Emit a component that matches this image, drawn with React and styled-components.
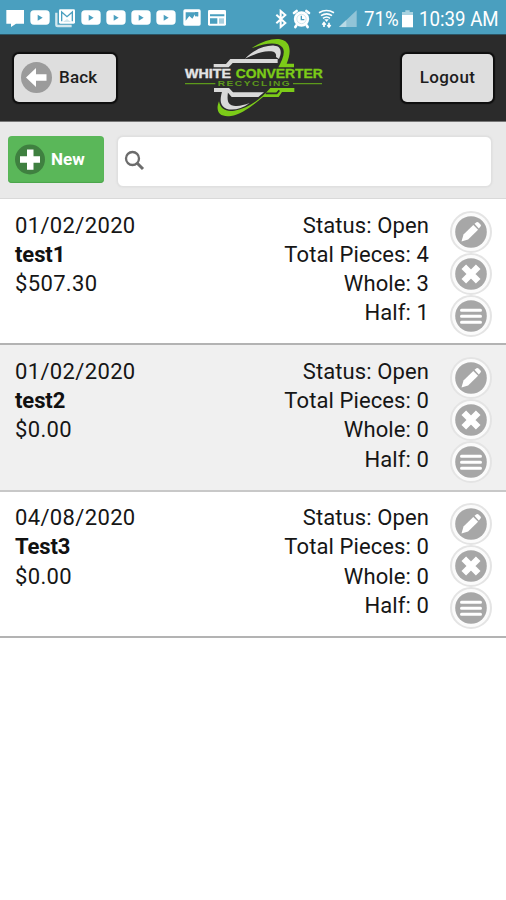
import React from 'react';
import styled, { createGlobalStyle, css } from 'styled-components';

const GlobalStyle = createGlobalStyle`
  * { box-sizing: border-box; }
  body {
    margin: 0;
    background: #fff;
    color: #161616;
    font-family: Roboto, "Liberation Sans", sans-serif;
  }
  svg { display: block; flex: none; }
`;

const Screen = styled.div`
  height: 900px;
  overflow: hidden;
  background: #fff;
`;

const StatusBar = styled.div`
  display: flex;
  justify-content: space-between;
  height: 35px;
  padding: 0 7px 0 4.7px;
  background: #4a9fbf;
  border-bottom: 1px solid #2b5565;
  color: #fff;
`;

const Notifications = styled.div`
  display: flex;
  gap: 5.3px;
  padding-top: 8px;
`;

const SystemInfo = styled.div`
  display: flex;
  align-items: center;
  padding-top: 3px;
`;

const StatusText = styled.span`
  width: ${(props) => props.$width}px;
  font-size: 21px;
  line-height: 28px;
  white-space: nowrap;
  transform: scaleX(0.89);
  transform-origin: left;
`;

const Header = styled.header`
  display: flex;
  align-items: flex-start;
  justify-content: space-between;
  height: 87px;
  padding: 0 13px 0 14px;
  background: #2b2b2b;
  border-bottom: 1px solid #777;
`;

const HeaderButton = styled.button`
  display: flex;
  align-items: center;
  justify-content: ${(props) => (props.$icon ? 'flex-start' : 'center')};
  gap: 7px;
  width: ${(props) => (props.$icon ? 102 : 91)}px;
  height: 48px;
  margin-top: 19px;
  padding: 0 ${(props) => (props.$icon ? 7 : 0)}px 2px;
  border: 0;
  border-radius: 5px;
  background: #dedede;
  box-shadow: 0 0 1px 1.5px #0e0e0e;
  color: #1d1d1d;
  font: 500 17px Roboto, "Liberation Sans", sans-serif;
  letter-spacing: ${(props) => (props.$icon ? 0.2 : 0.4)}px;
`;

const LogoBox = styled.div`
  padding-top: 2px;
  margin-right: 8px;
`;

const Toolbar = styled.div`
  display: flex;
  align-items: flex-start;
  gap: 15px;
  height: 77px;
  padding: 14px 14px 0 8px;
  background: #e9e9e9;
  border-bottom: 1px solid #d9d9d9;
`;

const NewButton = styled.button`
  display: flex;
  align-items: center;
  gap: 6px;
  width: 96px;
  height: 47px;
  padding: 0 7px 1px;
  border: 0;
  border-radius: 4px;
  background: #5ab759;
  box-shadow: inset 0 -1px 1px #4aa54a;
  color: #fff;
  font: 700 17px Roboto, "Liberation Sans", sans-serif;
`;

const SearchField = styled.div`
  display: flex;
  flex: 1;
  align-items: center;
  height: 51px;
  margin-left: -2px;
  padding: 0 6px 2px;
  border: 1px solid #e0e0e0;
  border-radius: 6px;
  background: #fff;
  box-shadow: 0 0 2px #d2d2d2;
`;

const OrderList = styled.ul`
  margin: 0;
  padding: 0;
  list-style: none;
`;

const OrderRow = styled.li`
  display: flex;
  height: 146.3px;
  padding: 11.6px 14px 0 15px;
  border-bottom: 2px solid #b3b3b3;
  background: #fff;
  font-size: 22px;
  line-height: 29.3px;
  letter-spacing: 0.35px;

  ${(props) => props.$shaded && css`
    background: #f0f0f0;
    border-bottom-color: #c8c8c8;
  `}
`;

const OrderSummary = styled.div`
  flex: 1;
`;

const OrderName = styled.div`
  font-weight: 700;
  color: #111;
  letter-spacing: -0.1px;
`;

const OrderCounts = styled.div`
  margin-right: 21px;
  text-align: right;
  letter-spacing: 0.1px;
`;

const Actions = styled.div`
  display: flex;
  flex-direction: column;
`;

const ActionButton = styled.button`
  display: flex;
  align-items: center;
  justify-content: center;
  width: 42px;
  height: 42px;
  padding: 0;
  border: 2px solid #e4e4e4;
  border-radius: 50%;
  background: #fbfbfb;
`;

const ChatIcon = () => (
  <svg width="20" height="20" viewBox="0 0 60 60" fill="#fff">
    <path d="M4 6h53v41H33L18 57V47H4z" />
  </svg>
);

const YoutubeIcon = () => (
  <svg width="20" height="20" viewBox="0 0 60 60">
    <rect x="1" y="7" width="58" height="43" rx="11" fill="#fff" />
    <path d="M23 20l15 9-15 9z" fill="#4a9fbf" />
  </svg>
);

const MailIcon = () => (
  <svg width="20" height="20" viewBox="0 0 60 60">
    <path d="M4 14v36q0 4 4 4h42" fill="none" stroke="#d3e7ee" strokeWidth="7" />
    <rect x="12" y="4" width="48" height="43" rx="4" fill="#fff" />
    <path d="M20 40V12l16 14 16-14v28" fill="none" stroke="#4a9fbf" strokeWidth="4" />
    <path d="M24 42l12-9 12 9z" fill="#d3e7ee" />
  </svg>
);

const PictureIcon = () => (
  <svg width="20" height="20" viewBox="0 0 60 60">
    <rect x="4" y="4" width="52" height="49" rx="5" fill="#fff" />
    <path d="M11 13h37v13l-8-9-9 15-9-8-11 14z" fill="#4a9fbf" />
    <path d="M39 12h10v13H39z" fill="#4a9fbf" />
  </svg>
);

const NewsIcon = () => (
  <svg width="20" height="20" viewBox="0 0 60 60">
    <rect x="3" y="6" width="54" height="47" rx="4" fill="#fff" />
    <path d="M9 19h43v6H9zM9 31h22v16H9z" fill="#4a9fbf" />
    <path d="M36 31h15v16H36z" fill="#a9d0df" />
  </svg>
);

const BluetoothIcon = () => (
  <svg width="14" height="20" viewBox="0 0 42 60">
    <path d="M7 17l27 25-14 12V6l14 12L7 43" fill="none" stroke="#fff" strokeWidth="6" />
  </svg>
);

const AlarmIcon = () => (
  <svg width="19" height="20" viewBox="0 0 57 60">
    <g stroke="#fff" strokeWidth="8" strokeLinecap="round">
      <path d="M6 12l8-6M51 12l-8-6M13 49l-3 5M44 49l3 5" />
    </g>
    <circle cx="28.500" cy="30" r="23" fill="#fff" />
    <circle cx="28.500" cy="30" r="14" fill="none" stroke="#cfe6ee" strokeWidth="3" />
    <path d="M28 20v12h9" fill="none" stroke="#4a9fbf" strokeWidth="4" />
  </svg>
);

const WifiIcon = () => (
  <svg width="17" height="20" viewBox="0 0 51 60" fill="none" stroke="#fff">
    <path d="M3 11q22-13 45 0M9 20q17-11 33 0M15 28q11-8 21 0" strokeWidth="5" />
    <path d="M19 31h13l-6 8z" fill="#fff" stroke="none" />
    <path d="M18 54V43m-5 4l5-6 5 6M33 41v11m-5-4l5 6 5-6" strokeWidth="5" />
  </svg>
);

const SignalIcon = () => (
  <svg width="18" height="20" viewBox="0 0 54 60">
    <path d="M53 4v50H0z" fill="#91c4d7" />
    <path d="M22 33v21H0z" fill="#b9dae6" />
  </svg>
);

const BatteryIcon = () => (
  <svg width="11" height="20" viewBox="0 0 33 60">
    <path d="M10 4h13v5h10v10H0V9h10z" fill="#a9d2e0" />
    <path d="M0 18h33v37H0z" fill="#fff" />
  </svg>
);

const BackIcon = () => (
  <svg width="31" height="31" viewBox="0 0 31 31">
    <circle cx="15.500" cy="15.500" r="15.500" fill="#9b9b9b" />
    <path d="M5 15.500L15 6v6.200h10.500v6.600H15V25z" fill="#fff" />
  </svg>
);

const PlusIcon = () => (
  <svg width="30" height="31" viewBox="0 0 30 31">
    <circle cx="15" cy="15.500" r="15" fill="#3f8040" />
    <path d="M12 5.500h6.500v6.800H25v6.500h-6.500v7H12v-7H5v-6.500h7z" fill="#fff" />
  </svg>
);

const SearchIcon = () => (
  <svg width="21" height="21" viewBox="0 0 21 21" fill="none" stroke="#6c6c6c">
    <circle cx="8.500" cy="8.500" r="6.500" strokeWidth="2.300" />
    <path d="M13 13l6 6" strokeWidth="3" />
  </svg>
);

const PencilIcon = () => (
  <svg width="32" height="32" viewBox="0 0 32 32">
    <circle cx="16" cy="16" r="15.800" fill="#a7a7a7" />
    <path d="M6.500 25.500l2-7L18.300 9l4.800 4.800-10 9.600z" fill="#fff" />
    <path d="M19.500 7.800l2-1.600q1-.7 2 .2l2 2q1 1 0 2l-1.700 2z" fill="#fff" />
  </svg>
);

const DeleteIcon = () => (
  <svg width="32" height="32" viewBox="0 0 32 32">
    <circle cx="16" cy="16" r="15.800" fill="#a7a7a7" />
    <path d="M8.800 8.800l14.400 14.400M23.200 8.800L8.800 23.200" stroke="#fff" strokeWidth="6.500" />
  </svg>
);

const BarsIcon = () => (
  <svg width="32" height="32" viewBox="0 0 32 32">
    <circle cx="16" cy="16" r="15.800" fill="#a7a7a7" />
    <path d="M6.500 10.300h19M6.500 16.300h19M6.500 22.300h19" stroke="#fff" strokeWidth="3" strokeLinecap="round" />
  </svg>
);

const Logo = () => (
  <svg width="144" height="81" viewBox="24 9 432 243">
    {/* upper half of the converter and its ring */}
    <path d="M116 90h37l13-15h142v12H173l-12 13h-45z" fill="#d9d9d9" />
    <path d="M210 74c25-26 60-41 88-39 15 1 22 10 18 29l-4 11-9-6c2-12-5-17-19-17-22-1-44 8-74 22z" fill="#d9d9d9" />
    <path d="M230 43c34-24 76-35 98-23 22 12 18 43 7 69h22v11h-47c13-24 23-48 11-61-15-17-53-11-91 4z" fill="#7ccb18" />
    {/* lower half */}
    <path d="M117 162h45l12 13h93l-17 14h-80l-13-15h-40z" fill="#d9d9d9" />
    <path d="M141 173h18c-3 25-2 39 17 42 15 3 30-2 48-8-24 18-52 24-70 17-19-8-20-27-13-51z" fill="#d9d9d9" />
    <path d="M132 202c4 23 21 32 46 28 42-7 77-33 108-68h72v12h-37l-10 15h-47c-36 31-68 53-96 57-35 5-48-15-36-44z" fill="#7ccb18" />
    <path d="M272 178h33l8-9" stroke="#2b2b2b" strokeWidth="5" fill="none" />
    <path d="M30 149h91M354 149h87" stroke="#5d9a1b" strokeWidth="4" />
    <g fontFamily="'Liberation Sans', sans-serif" fontWeight="700">
      <text x="30" y="132" fontSize="36" fill="#e4e4e4" stroke="#e4e4e4" textLength="138" lengthAdjust="spacingAndGlyphs">WHITE</text>
      <text x="182" y="132" fontSize="36" fill="#7ccb18" stroke="#7ccb18" textLength="261" lengthAdjust="spacingAndGlyphs">CONVERTER</text>
      <text x="128" y="156" fontSize="20" fill="#5d9a1b" textLength="221" letterSpacing="3" lengthAdjust="spacingAndGlyphs">RECYCLING</text>
    </g>
  </svg>
);

const orders = [
  { date: '01/02/2020', name: 'test1', total: '$507.30', pieces: 4, whole: 3, half: 1 },
  { date: '01/02/2020', name: 'test2', total: '$0.00', pieces: 0, whole: 0, half: 0 },
  { date: '04/08/2020', name: 'Test3', total: '$0.00', pieces: 0, whole: 0, half: 0 },
];

const Order = ({ order, shaded }) => (
  <OrderRow $shaded={shaded}>
    <OrderSummary>
      <div>{order.date}</div>
      <OrderName>{order.name}</OrderName>
      <div>{order.total}</div>
    </OrderSummary>
    <OrderCounts>
      <div>Status: Open</div>
      <div>Total Pieces: {order.pieces}</div>
      <div>Whole: {order.whole}</div>
      <div>Half: {order.half}</div>
    </OrderCounts>
    <Actions>
      <ActionButton><PencilIcon /></ActionButton>
      <ActionButton><DeleteIcon /></ActionButton>
      <ActionButton><BarsIcon /></ActionButton>
    </Actions>
  </OrderRow>
);

const SystemIcons = styled.div`
  display: flex;
  gap: ${(props) => props.$gap}px;
  margin-right: ${(props) => props.$after}px;
`;

const App = () => (
  <Screen>
    <GlobalStyle />
    <StatusBar>
      <Notifications>
        <ChatIcon />
        <YoutubeIcon />
        <MailIcon />
        <YoutubeIcon />
        <YoutubeIcon />
        <YoutubeIcon />
        <YoutubeIcon />
        <PictureIcon />
        <NewsIcon />
      </Notifications>
      <SystemInfo>
        <SystemIcons $gap={4} $after={7}><BluetoothIcon /><AlarmIcon /></SystemIcons>
        <SystemIcons $gap={4} $after={7}><WifiIcon /><SignalIcon /></SystemIcons>
        <StatusText $width={38}>71%</StatusText>
        <SystemIcons $after={6}><BatteryIcon /></SystemIcons>
        <StatusText $width={80}>10:39 AM</StatusText>
      </SystemInfo>
    </StatusBar>
    <Header>
      <HeaderButton $icon><BackIcon />Back</HeaderButton>
      <LogoBox><Logo /></LogoBox>
      <HeaderButton>Logout</HeaderButton>
    </Header>
    <Toolbar>
      <NewButton><PlusIcon />New</NewButton>
      <SearchField><SearchIcon /></SearchField>
    </Toolbar>
    <OrderList>
      {orders.map((order, i) => (
        <Order key={order.name} order={order} shaded={i % 2 === 1} />
      ))}
    </OrderList>
  </Screen>
);

export default App;
